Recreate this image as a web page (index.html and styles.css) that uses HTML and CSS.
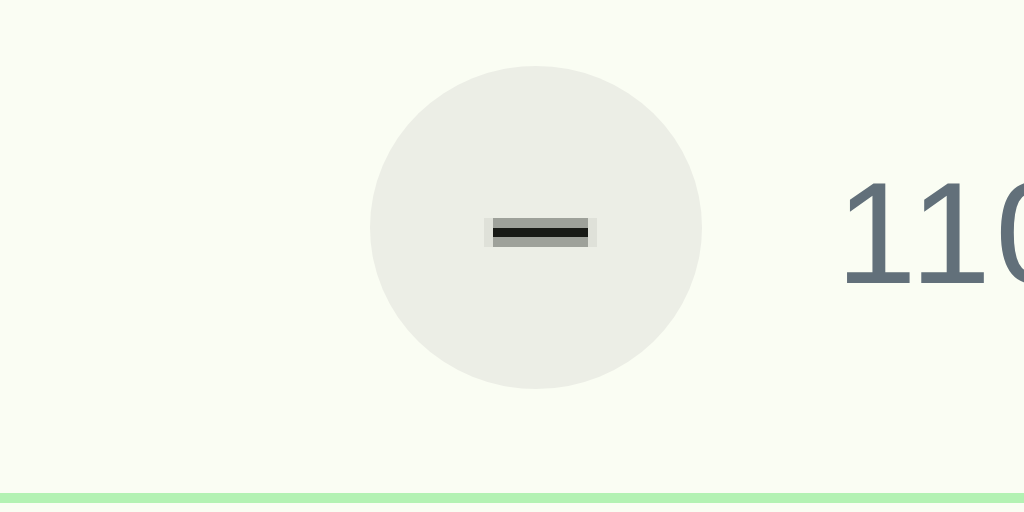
FILE: index.html
```html
<!DOCTYPE html>
<html>
<head>
<meta charset="utf-8">
<link rel="stylesheet" href="styles.css">
</head>
<body>
<div class="stage">
  <div class="button"><div class="minus"></div></div>
  <div class="count">110</div>
</div>
<div class="bar"></div>
</body>
</html>
```
FILE: styles.css
```css
html, body {
  margin: 0;
  padding: 0;
  background: #fafdf3;
  width: 1024px;
  height: 512px;
  overflow: hidden;
}
.stage {
  display: flex;
  align-items: flex-start;
  height: 493px;
  overflow: hidden;
}
.button {
  flex-shrink: 0;
  margin: 66px 0 0 370px;
  width: 332px;
  height: 323px;
  border-radius: 50%;
  background: #eceee6;
  display: flex;
  align-items: center;
  justify-content: center;
}
.minus {
  width: 95px;
  height: 29px;
  border-left: 9px solid #dfe1d9;
  border-right: 9px solid #dfe1d9;
  background: linear-gradient(#9ea19a 0 10px, #181a16 10px 19px, #9ea19a 19px 29px);
  margin: 10px 0 0 9px;
}
.count {
  flex-shrink: 0;
  margin: 161px 0 0 134px;
  font-family: "Liberation Sans", Arial, sans-serif;
  font-size: 145px;
  letter-spacing: 4.4px;
  line-height: 1;
  white-space: nowrap;
  color: #62707a;
}
.bar {
  height: 10px;
  background: #b3f2b3;
}
```
